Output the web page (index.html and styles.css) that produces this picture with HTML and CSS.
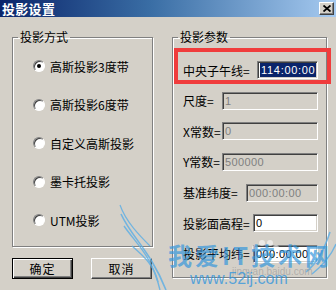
FILE: index.html
```html
<!DOCTYPE html>
<html lang="zh-CN">
<head>
    <meta charset="UTF-8">
    <title>投影设置</title>
    <link rel="stylesheet" href="styles.css">
</head>
<body>
    <div class="window">
        <!-- Titelbalk -->
        <div class="titlebar">
            <span class="title">投影设置</span>
            <span class="close">
                <svg width="8" height="7" viewBox="0 0 8 7"><path d="M0.5 0.5 L7.5 6.5 M7.5 0.5 L0.5 6.5" stroke="#000" stroke-width="1.8"/></svg>
            </span>
        </div>

        <div class="content">
            <div class="left-col">
                <fieldset class="group group-left">
                    <legend>投影方式</legend>
                    <div class="radio-list">
                        <div class="radio-row"><span class="radio checked"></span>高斯投影3度带</div>
                        <div class="radio-row"><span class="radio"></span>高斯投影6度带</div>
                        <div class="radio-row"><span class="radio"></span>自定义高斯投影</div>
                        <div class="radio-row"><span class="radio"></span>墨卡托投影</div>
                        <div class="radio-row"><span class="radio"></span>UTM投影</div>
                    </div>
                </fieldset>
                <div class="buttons">
                    <span class="btn btn-default">确定</span>
                    <span class="btn">取消</span>
                </div>
            </div>

            <fieldset class="group group-right">
                <legend>投影参数</legend>
                <div class="param-list">
                    <div class="param-row">
                        <span class="param-label">中央子午线=</span>
                        <span class="field w-61"><span class="selected">114:00:00</span></span>
                    </div>
                    <div class="param-row">
                        <span class="param-label">尺度=</span>
                        <span class="field disabled w-96">1</span>
                    </div>
                    <div class="param-row">
                        <span class="param-label">X常数=</span>
                        <span class="field disabled w-96">0</span>
                    </div>
                    <div class="param-row">
                        <span class="param-label">Y常数=</span>
                        <span class="field disabled w-96">500000</span>
                    </div>
                    <div class="param-row">
                        <span class="param-label">基准纬度=</span>
                        <span class="field disabled w-72">000:00:00</span>
                    </div>
                    <div class="param-row">
                        <span class="param-label">投影面高程=</span>
                        <span class="field w-65">0</span>
                    </div>
                    <div class="param-row">
                        <span class="param-label">投影平均纬=</span>
                        <span class="field w-65">000:00:00</span>
                    </div>
                </div>
            </fieldset>
        </div>

        <!-- Rode markering rond de eerste parameter -->
        <div class="highlight"></div>

        <!-- Watermerk -->
        <div class="watermark">
            <svg class="wings" width="336" height="290" viewBox="0 0 336 290">
                <path d="M121 214 C132 238 150 250 166 290" stroke="#5aaee6" stroke-width="1.6" fill="none"/>
                <path d="M124 226 C138 246 152 256 160 290" stroke="#5aaee6" stroke-width="1.4" fill="none"/>
                <path d="M132 246 C146 258 154 266 158 282" stroke="#5aaee6" stroke-width="1.4" fill="none"/>
                <path d="M120 205 C126 222 140 236 150 246" stroke="#5aaee6" stroke-width="1.2" fill="none"/>
                <path d="M330 232 C324 250 318 262 306 272" stroke="#5aaee6" stroke-width="1.6" fill="none"/>
                <path d="M336 244 C330 258 322 266 312 274" stroke="#5aaee6" stroke-width="1.4" fill="none"/>
                <circle cx="255" cy="248" r="3" fill="#ffffff" opacity="0.7"/>
                <circle cx="262" cy="243" r="3" fill="#ffffff" opacity="0.7"/>
                <circle cx="270" cy="243" r="3" fill="#ffffff" opacity="0.7"/>
                <circle cx="276" cy="248" r="3" fill="#ffffff" opacity="0.7"/>
            </svg>
            <span class="wm-title">我爱IT技术网</span>
            <span class="wm-sub">jingyan.baidu.com</span>
            <span class="wm-url">www.52ij.com</span>
        </div>
    </div>
</body>
</html>
```

FILE: styles.css
```css
body {
    margin: 0;
    padding: 0;
    background-color: #d4d0c8;
    font-family: "Noto Sans CJK SC", "Liberation Sans", sans-serif;
    font-size: 12px;
    color: #000000;
}
.window {
    position: relative;
    width: 336px;
    height: 290px;
    overflow: hidden;
    background-color: #d4d0c8; /* klassiek Windows grijs */
}
.titlebar {
    height: 17px;
    display: flex;
    align-items: center;
    justify-content: space-between;
    padding: 0 2px 0 2px;
    background: linear-gradient(to right, #0a246a, #3a6ea5 45%, #a6caf0);
}
.title {
    color: #ffffff;
    font-weight: bold;
    font-size: 13px;
    line-height: 17px;
    letter-spacing: 0.3px;
}
.close {
    width: 15px;
    height: 13px;
    box-sizing: border-box;
    display: flex;
    align-items: center;
    justify-content: center;
    background-color: #d4d0c8;
    border: 1px solid;
    border-color: #ffffff #404040 #404040 #ffffff;
    box-shadow: inset -1px -1px 0 #808080;
}
.content {
    display: flex;
    gap: 19px;
    padding: 13px 0 0 12px;
}
.left-col {
    width: 141px;
    display: flex;
    flex-direction: column;
}
.group {
    margin: 0;
    padding: 0;
    box-sizing: border-box;
    border: 1px solid #808080;
    box-shadow: inset 1px 1px 0 #ffffff, 1px 1px 0 #ffffff;
    min-width: 0;
}
.group legend {
    margin-left: 5px;
    padding: 0 2px;
    line-height: 14px;
    font-size: 12px;
}
.group-left {
    height: 217px;
}
.radio-list {
    padding: 3px 0 0 20px;
}
.radio-row {
    height: 38.5px;
    display: flex;
    align-items: center;
    gap: 5px;
    white-space: nowrap;
}
.radio {
    width: 12px;
    height: 12px;
    box-sizing: border-box;
    border-radius: 50%;
    background-color: #ffffff;
    border: 1px solid;
    border-color: #808080 #ffffff #ffffff #808080;
    box-shadow: inset 1px 1px 0 #404040;
    display: flex;
    align-items: center;
    justify-content: center;
}
.radio.checked::after {
    content: "";
    width: 4px;
    height: 4px;
    border-radius: 50%;
    background-color: #000000;
}
.buttons {
    display: flex;
    gap: 18px;
    margin-top: 11px;
}
.btn {
    width: 61px;
    height: 21px;
    box-sizing: border-box;
    display: flex;
    align-items: center;
    justify-content: center;
    background-color: #d4d0c8;
    border: 1px solid;
    border-color: #ffffff #404040 #404040 #ffffff;
    box-shadow: inset -1px -1px 0 #808080;
    font-size: 12px;
    letter-spacing: 1px;
}
.btn-default {
    border-color: #000000;
    box-shadow: inset 1px 1px 0 #ffffff, inset -1px -1px 0 #404040, inset -2px -2px 0 #808080;
}
.group-right {
    width: 155px;
    height: 248px;
}
.param-list {
    padding: 17px 8px 0 10px;
    display: flex;
    flex-direction: column;
    gap: 12.67px;
}
.param-row {
    height: 18px;
    display: flex;
    align-items: center;
    white-space: nowrap;
}
.param-label {
    font-size: 12px;
}
.field {
    margin-left: auto;
    height: 18px;
    box-sizing: border-box;
    display: flex;
    align-items: center;
    padding-left: 2px;
    background-color: #ffffff;
    border: 1px solid;
    border-color: #808080 #ffffff #ffffff #808080;
    box-shadow: inset 1px 1px 0 #404040, inset -1px -1px 0 #d4d0c8;
    font-family: "Liberation Sans", sans-serif;
    font-size: 11px;
    letter-spacing: 0.4px;
}
.field.disabled {
    background-color: #d4d0c8;
    color: #808080;
}
.selected {
    background-color: #0a246a;
    color: #ffffff;
    line-height: 14px;
    padding: 0 1px;
    letter-spacing: 0.7px;
}
.w-61 { width: 61px; }
.w-96 { width: 96px; }
.w-72 { width: 72px; }
.w-65 { width: 65px; }

.highlight {
    position: absolute;
    left: 174px;
    top: 48px;
    width: 157px;
    height: 36px;
    box-sizing: border-box;
    border: 4px solid #f03c3c;
}

.watermark {
    position: absolute;
    left: 0;
    top: 0;
    width: 336px;
    height: 290px;
    pointer-events: none;
}
.wings {
    position: absolute;
    left: 0;
    top: 0;
    opacity: 0.8;
}
.wm-title {
    position: absolute;
    left: 168px;
    top: 240px;
    color: rgba(52, 150, 220, 0.7);
    font-size: 24px;
    font-weight: bold;
    letter-spacing: 3px;
    line-height: 30px;
    white-space: nowrap;
}
.wm-sub {
    position: absolute;
    left: 232px;
    top: 266px;
    color: rgba(150, 150, 150, 0.6);
    font-family: "Liberation Sans", sans-serif;
    font-size: 10px;
    white-space: nowrap;
}
.wm-url {
    position: absolute;
    left: 190px;
    top: 270px;
    color: rgba(52, 150, 220, 0.8);
    font-family: "Liberation Sans", sans-serif;
    font-size: 16px;
    white-space: nowrap;
}
```
